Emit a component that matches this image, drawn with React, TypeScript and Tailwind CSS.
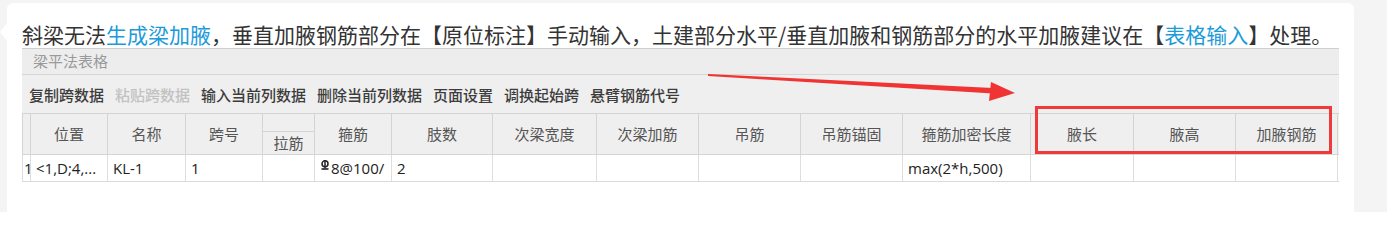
import React from "react";

const cols = [
  { w: "w-[8px]", label: "" },
  { w: "w-[77px]", label: "位置" },
  { w: "w-[78px]", label: "名称" },
  { w: "w-[77px]", label: "跨号" },
  { w: "w-[52px]", label: "拉筋", split: true },
  { w: "w-[77px]", label: "箍筋" },
  { w: "w-[101px]", label: "肢数" },
  { w: "w-[104px]", label: "次梁宽度" },
  { w: "w-[102px]", label: "次梁加筋" },
  { w: "w-[102px]", label: "吊筋" },
  { w: "w-[102px]", label: "吊筋锚固" },
  { w: "w-[128px]", label: "箍筋加密长度" },
  { w: "w-[103px]", label: "腋长" },
  { w: "w-[102px]", label: "腋高" },
  { w: "w-[102px]", label: "加腋钢筋" },
];

const tools = [
  { t: "复制跨数据" },
  { t: "粘贴跨数据", off: true },
  { t: "输入当前列数据" },
  { t: "删除当前列数据" },
  { t: "页面设置" },
  { t: "调换起始跨" },
  { t: "悬臂钢筋代号" },
];

function RebarMark() {
  // grade III rebar symbol, drawn small and raised
  return (
    <svg width="10" height="10" viewBox="0 0 10 10" className="inline-block -mt-[6px] mr-[1px]">
      <circle cx="5" cy="3.8" r="3" fill="none" stroke="#222" strokeWidth="1.5" />
      <line x1="5" y1="0" x2="5" y2="8.5" stroke="#222" strokeWidth="1.5" />
      <line x1="1.5" y1="9" x2="8.5" y2="9" stroke="#222" strokeWidth="1.6" />
    </svg>
  );
}

export default function App() {
  const row = ["1", "<1,D;4,...", "KL-1", "1", "", "", "2", "", "", "", "", "max(2*h,500)", "", "", ""];

  return (
    <div className="h-[212px] w-[1387px] bg-[#f4f4f4] pt-[3px] pl-[7px] pr-[33px] overflow-hidden">
      <div className="relative h-[260px] bg-white rounded-t-md pt-[17px] pl-[15px] pr-[15px]">
        {/* bubble tail */}
        <div className="absolute -left-[7px] top-[20px] w-0 h-0 border-y-[9px] border-y-transparent border-r-[7px] border-r-white" />

        <p className="text-[21px] leading-[28px] text-[#333] whitespace-nowrap font-['Noto_Sans_CJK_SC',sans-serif]">
          斜梁无法<span className="text-[#1d9bd9]">生成梁加腋</span>，垂直加腋钢筋部分在【原位标注】手动输入，土建部分水平/垂直加腋和钢筋部分的水平加腋建议在【
          <span className="text-[#1d9bd9]">表格输入</span>】处理。
        </p>

        {/* embedded screenshot */}
        <div className="relative w-[1317px] border-t border-[#cfcfcf] font-['Noto_Sans_CJK_SC',sans-serif]">
          <div className="h-[26px] bg-[#ededed] border-b border-[#d6d6d6] flex items-center pl-[11px] text-[15px] text-[#9a9a9a]">
            梁平法表格
          </div>
          <div className="h-[38px] bg-[#efefef] flex items-center gap-[11px] pl-[7px] pt-[2px] text-[15px] font-medium">
            {tools.map((b) => (
              <span key={b.t} className={b.off ? "text-[#c2c2c2]" : "text-[#3c3c3c]"}>
                {b.t}
              </span>
            ))}
          </div>

          {/* header */}
          <div className="flex h-[42px] bg-[#efefef] border-y border-[#d4d4d4]">
            {cols.map((c, i) =>
              c.split ? (
                <div key={i} className={`${c.w} shrink-0 border-l border-[#d4d4d4] flex flex-col`}>
                  <div className="h-[20px] border-b border-[#d4d4d4]" />
                  <div className="flex-1 flex items-center justify-center text-[15px] text-[#555]">{c.label}</div>
                </div>
              ) : (
                <div
                  key={i}
                  className={`${c.w} shrink-0 border-l border-[#d4d4d4] flex items-center justify-center text-[15px] text-[#555]`}
                >
                  {c.label}
                </div>
              )
            )}
            <div className="w-[2px] border-l border-[#d4d4d4]" />
          </div>

          {/* data row */}
          <div className="flex h-[27px] bg-white border-b border-[#dadada] text-[15px] text-[#222] font-['Open_Sans','Noto_Sans_CJK_SC',sans-serif]">
            {cols.map((c, i) => (
              <div
                key={i}
                className={`${c.w} shrink-0 border-l border-[#dedede] flex items-center whitespace-nowrap overflow-visible ${i === 0 ? "pl-[1px]" : "pl-[5px]"}`}
              >
                {i === 5 ? (
                  <span className="flex items-center">
                    <RebarMark />
                    8@100/
                  </span>
                ) : (
                  row[i]
                )}
              </div>
            ))}
            <div className="w-[2px] border-l border-[#dedede]" />
          </div>

          {/* red highlight box */}
          <div className="absolute left-[1013px] top-[57px] w-[297px] h-[48px] border-[3px] border-[#ee3a3a]" />

          {/* red arrow */}
          <svg className="absolute left-0 top-0 pointer-events-none" width="1317" height="70" viewBox="0 0 1317 70">
            <polygon points="686,25 971,39 971,44.5 686,27" fill="#f03434" />
            <polygon points="969,33 993,44 967,52" fill="#f03434" />
          </svg>
        </div>
      </div>
    </div>
  );
}
